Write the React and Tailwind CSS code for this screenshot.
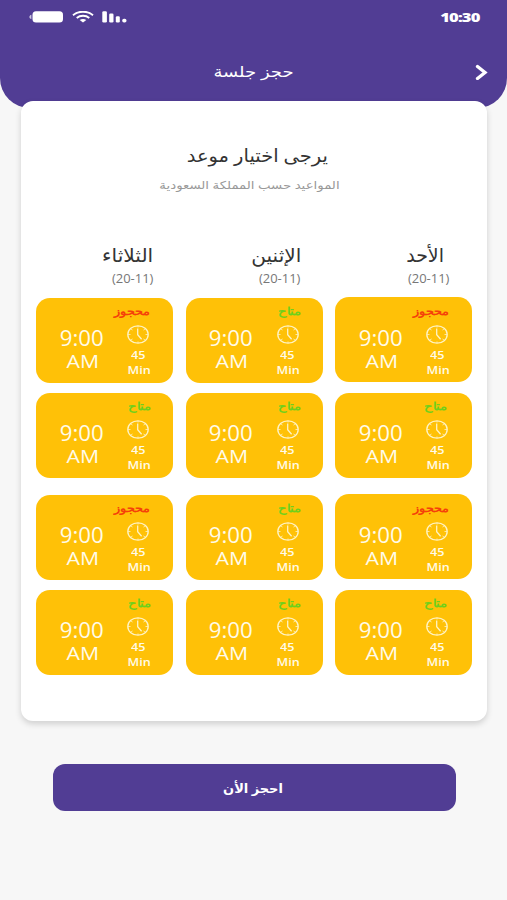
import React from 'react'

const days = [
    { name: 'الأحد', offset: 'pr-[28px]', dateOffset: 'pr-[23px]', slots: ['booked', 'free', 'booked', 'free'], first: true },
    { name: 'الإثنين', offset: 'pr-[21px]', dateOffset: 'pr-[22px]', slots: ['free', 'free', 'free', 'free'] },
    { name: 'الثلاثاء', offset: 'pr-[20px]', dateOffset: 'pr-[20px]', slots: ['booked', 'free', 'booked', 'free'] },
];

function StatusBar() {
    return (
        <div dir="ltr" className="flex h-[34px] items-center justify-between pl-[29px] pr-[27px]">
            <div className="flex items-center">
                <svg width="35" height="12" viewBox="0 0 35 12" fill="white">
                    <rect x="3.5" y="0.3" width="30.5" height="11.2" rx="3.5" />
                    <path d="M2.4 3.8v4.4C1 7.8.4 7 .4 6s.6-1.8 2-2.2z" opacity=".7" />
                </svg>
                <svg className="ml-2" width="22" height="12" viewBox="0 0 22 12" fill="none" stroke="white" strokeWidth="1.9">
                    <path d="M1 4.2C6.500-.5 15.500-.5 21 4.2" />
                    <path d="M4.7 6.9c3.500-2.800 9.100-2.800 12.600 0" />
                    <path d="M7.7 9c1.900-1.400 4.700-1.400 6.600 0L11 11.5z" fill="white" stroke="none" />
                </svg>
                <svg className="ml-2" width="26" height="12" viewBox="0 0 26 12" fill="white">
                    <rect x="0.3" y="0.2" width="4.6" height="11.3" rx="1.3" />
                    <rect x="7.2" y="2.5" width="4.3" height="9" rx="1.3" />
                    <rect x="13.8" y="5.2" width="4" height="6.3" rx="1.3" />
                    <rect x="20.2" y="7.7" width="4.3" height="3.8" rx="1.8" />
                </svg>
            </div>
            <span className="inline-block origin-right scale-x-[1.38] pt-px font-['Open_Sans',sans-serif] text-[12px] font-extrabold leading-none tracking-[-0.6px] text-white">10:30</span>
        </div>
    )
}

function Clock() {
    return (
        <svg width="22" height="19" viewBox="0 0 22 19" fill="none" stroke="#fff3c4" strokeWidth="1.3">
            <ellipse cx="11" cy="9.5" rx="10.2" ry="8.7" />
            <path d="M10.7 3.5v6.300l3.900 4.500" />
            <path d="M11 1v1.500M11 16.500V18M1 9.500h2.500M18.500 9.500H21M4 4l1.500 1M18 4l-1.500 1M4 15l1.500-1M18 15l-1.500-1" strokeWidth=".8" />
        </svg>
    )
}

function Slot({ status, raised, first }) {
    return (
        <div dir="ltr" className={`h-[85px] w-[137px] rounded-[14px] bg-[#ffc107] font-['Open_Sans','Noto_Sans',sans-serif] text-[#fffbe9] ${raised ? 'pt-px' : 'pt-0'}`}>
            <div dir="rtl" className="flex h-[27px] pt-[4px]">
                {status === 'booked' ? (
                    <span className="mr-[23px] inline-block h-[18px] origin-right scale-x-[1.17] text-[11px] font-bold leading-[18px] text-[#f5400a]">محجوز</span>
                ) : (
                    <span className={`inline-block h-[18px] origin-right scale-x-[1.2] text-[11px] font-bold leading-[18px] text-[#6fd01c] ${first ? 'mr-[25px]' : 'mr-[22px]'}`}>متاح</span>
                )}
            </div>
            <div className="flex">
                <div className="flex w-[91px] flex-col items-center text-[21px] leading-[23px]">
                    <span className="mt-[2px] inline-block scale-x-[1.06]">9:00</span>
                    <span className="inline-block translate-x-px scale-x-[1.18] text-[18px]">AM</span>
                </div>
                <div className="flex w-[22px] flex-col items-center text-[11px] font-semibold leading-[15px]">
                    <Clock />
                    <span className="mt-[3px] inline-block scale-x-[1.15]">45</span>
                    <span className="inline-block translate-x-px scale-x-[1.15]">Min</span>
                </div>
            </div>
        </div>
    )
}

export default function App() {
    return (
        <div dir="rtl" className="h-[900px] w-[507px] overflow-hidden bg-[#f7f7f7] font-['Noto_Sans','DejaVu_Sans',sans-serif]">
            <header className="h-[108px] rounded-b-[30px] bg-[#513d94]">
                <StatusBar />
                <div className="grid h-[76px] grid-cols-[60px_1fr_60px] items-center text-white">
                    <button className="pr-[19px]">
                        <svg width="13" height="16" viewBox="0 0 13 16" fill="none" stroke="white" strokeWidth="3.3">
                            <path d="M2.5 2.500l7.500 6-7.500 6" strokeLinecap="round" />
                        </svg>
                    </button>
                    <h1 className="scale-x-[1.2] pb-[2px] text-center text-[15px]">حجز جلسة</h1>
                </div>
            </header>

            <main className="relative -mt-[7px] mr-[20px] flex h-[620px] w-[466px] flex-col rounded-[12px] bg-white shadow-[0_3px_6px_rgba(0,0,0,0.16)]">
                <h2 className="mt-[40px] h-[28px] pl-[7px] text-center text-[18px] leading-[28px] text-[#333]">
                    <span className="inline-block scale-x-[1.08]">يرجى اختيار موعد</span>
                </h2>
                <p className="mt-[7px] h-[18px] pr-[9px] text-center text-[11px] leading-[18px] text-[#999]">
                    <span className="inline-block scale-x-[1.21]">المواعيد حسب المملكة السعودية</span>
                </p>
                <div className="mt-[45px] flex gap-[12.5px] pr-[15px]">
                    {days.map((day) => (
                        <section key={day.name} className="w-[137px]">
                            <h3 className={`h-[32px] text-[19px] leading-[32px] text-[#333] ${day.offset}`}>
                                <span className={`inline-block origin-right ${day.first ? 'scale-x-100' : 'scale-x-[1.06]'}`}>{day.name}</span>
                            </h3>
                            <p dir="ltr" className={`h-[18px] text-right font-['Open_Sans',sans-serif] text-[12px] leading-[16px] text-[#777] ${day.dateOffset}`}>
                                <span className="inline-block origin-right scale-x-[1.08]">(20-11)</span>
                            </p>
                            <div className={`flex flex-col ${day.first ? 'gap-[16px] pt-[8px]' : 'gap-[17px] pt-[9px]'}`}>
                                {[0, 2].map((start) => (
                                    <div key={start} className={`flex flex-col ${day.first ? 'gap-[11px]' : 'gap-[10px]'}`}>
                                        <Slot status={day.slots[start]} raised={day.first} first={day.first} />
                                        <Slot status={day.slots[start + 1]} first={day.first} />
                                    </div>
                                ))}
                            </div>
                        </section>
                    ))}
                </div>
            </main>

            <button className="mr-[51px] mt-[43px] block h-[47px] w-[403px] rounded-[12px] bg-[#513d94] pl-0 pr-[3px] pt-[2px] text-center text-[13px] font-bold text-white">
                احجز الأن
            </button>
        </div>
    )
}
